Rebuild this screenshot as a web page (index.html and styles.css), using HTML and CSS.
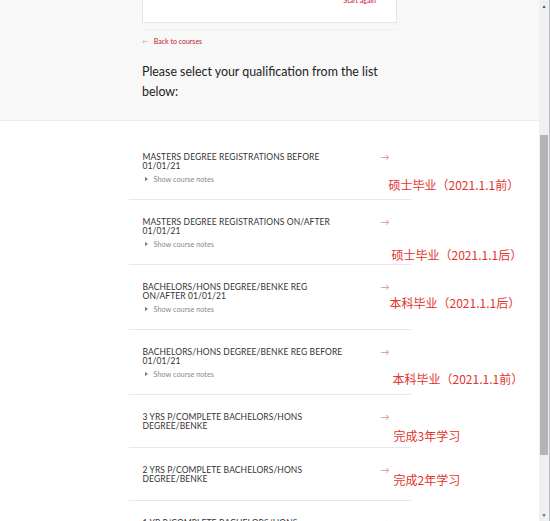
FILE: index.html
```html
<!DOCTYPE html>
<html lang="en">
<head>
    <meta charset="UTF-8">
    <meta name="viewport" content="width=device-width, initial-scale=1.0">
    <title>Select qualification</title>
    <link rel="stylesheet" href="styles.css">
</head>
<body>
    <div class="page">
        <div class="intro">
            <div class="summary-card">
                <a class="start-again" href="#">Start again</a>
            </div>
            <div class="back-row">
                <a class="back-link" href="#"><span class="back-arrow">&larr;</span> Back to courses</a>
            </div>
            <h1 class="intro-title">Please select your qualification from the list below:</h1>
        </div>

        <ul class="qual-list">
            <li class="qual">
                <div class="qual-body">
                    <div class="qual-title">Masters degree registrations before 01/01/21</div>
                    <div class="qual-notes"><span class="caret"></span>Show course notes</div>
                </div>
                <span class="qual-arrow">&rarr;</span>
                <span class="annot annot-1">硕士毕业（2021.1.1前）</span>
            </li>
            <li class="qual">
                <div class="qual-body">
                    <div class="qual-title">Masters degree registrations on/after 01/01/21</div>
                    <div class="qual-notes"><span class="caret"></span>Show course notes</div>
                </div>
                <span class="qual-arrow">&rarr;</span>
                <span class="annot annot-2">硕士毕业（2021.1.1后）</span>
            </li>
            <li class="qual">
                <div class="qual-body">
                    <div class="qual-title">Bachelors/hons degree/benke reg on/after 01/01/21</div>
                    <div class="qual-notes"><span class="caret"></span>Show course notes</div>
                </div>
                <span class="qual-arrow">&rarr;</span>
                <span class="annot annot-3">本科毕业（2021.1.1后）</span>
            </li>
            <li class="qual">
                <div class="qual-body">
                    <div class="qual-title">Bachelors/hons degree/benke reg before 01/01/21</div>
                    <div class="qual-notes"><span class="caret"></span>Show course notes</div>
                </div>
                <span class="qual-arrow">&rarr;</span>
                <span class="annot annot-4">本科毕业（2021.1.1前）</span>
            </li>
            <li class="qual">
                <div class="qual-body">
                    <div class="qual-title">3 yrs p/complete bachelors/hons degree/benke</div>
                </div>
                <span class="qual-arrow">&rarr;</span>
                <span class="annot annot-5">完成3年学习</span>
            </li>
            <li class="qual">
                <div class="qual-body">
                    <div class="qual-title">2 yrs p/complete bachelors/hons degree/benke</div>
                </div>
                <span class="qual-arrow">&rarr;</span>
                <span class="annot annot-6">完成2年学习</span>
            </li>
            <li class="qual">
                <div class="qual-body">
                    <div class="qual-title">1 yr p/complete bachelors/hons degree/benke</div>
                </div>
                <span class="qual-arrow">&rarr;</span>
            </li>
        </ul>
    </div>

    <div class="scrollbar">
        <div class="scroll-btn">&#9650;</div>
        <div class="scroll-track">
            <div class="scroll-thumb"></div>
        </div>
        <div class="scroll-btn">&#9660;</div>
    </div>
</body>
</html>
```

FILE: styles.css
```css
body {
    margin: 0;
    height: 521px;
    overflow: hidden;
    display: flex;
    font-family: 'Lato', 'Noto Sans', sans-serif;
    background-color: #fff;
    color: #2b2b2b;
}

.page {
    flex: 1;
    overflow: hidden;
}

/* top grey block */
.intro {
    background-color: #f8f8f8;
    border-bottom: 1px solid #ececec;
    height: 120px;
    display: flex;
    flex-direction: column;
    align-items: center;
}

.summary-card {
    width: 213px;
    margin-top: -20px;
    padding: 15px 20px 17px;
    background-color: #fff;
    border: 1px solid #e6e6e6;
    text-align: right;
    font-size: 7px;
    line-height: 9px;
}

.start-again {
    color: #c8102e;
    text-decoration: none;
}

.back-row {
    width: 255px;
    margin-top: 6px;
    padding-top: 6px;
    border-top: 1px solid #f0f0f0;
    font-size: 7px;
    line-height: 10px;
}

.back-link {
    color: #c0202f;
    text-decoration: none;
}

.back-arrow {
    color: #e29a9a;
    margin-right: 3px;
}

.intro-title {
    width: 255px;
    margin: 16px 0 0;
    font-size: 12.4px;
    font-weight: normal;
    line-height: 20px;
    color: #222;
}

/* qualification list */
.qual-list {
    list-style: none;
    margin: 0 auto;
    padding: 14px 0 0;
    width: 282px;
}

.qual {
    position: relative;
    display: flex;
    justify-content: space-between;
    padding: 18px 21px 16px 14px;
    border-bottom: 1px solid #e8e8e8;
}

.qual-title {
    width: 204px;
    font-size: 8.5px;
    letter-spacing: 0.1px;
    line-height: 9px;
    text-transform: uppercase;
    color: #333;
}

.qual-notes {
    margin-top: 4px;
    margin-bottom: -1px;
    font-size: 7.3px;
    line-height: 9px;
    color: #8a8a8a;
}

.caret {
    display: inline-block;
    width: 0;
    height: 0;
    margin: 0 6px 0 2px;
    border-top: 2px solid transparent;
    border-bottom: 2px solid transparent;
    border-left: 3px solid #777;
    vertical-align: 1px;
}

.qual-arrow {
    font-size: 9px;
    line-height: 8px;
    color: #d49494;
}

/* red notes written over the screenshot */
.annot {
    position: absolute;
    font-family: 'Noto Sans CJK SC', sans-serif;
    font-size: 12px;
    line-height: 14px;
    color: #e3332c;
    white-space: nowrap;
}

.annot-1 { left: 260px; top: 43px; }
.annot-2 { left: 263px; top: 48px; }
.annot-3 { left: 261px; top: 31px; }
.annot-4 { left: 264px; top: 42px; }
.annot-5 { left: 265px; top: 34px; }
.annot-6 { left: 265px; top: 25px; }

/* fake window scrollbar */
.scrollbar {
    width: 10px;
    display: flex;
    flex-direction: column;
    background-color: #f0f0f0;
    border-right: 1px solid #b8c0c8;
}

.scroll-btn {
    height: 12px;
    font-size: 5px;
    line-height: 12px;
    text-align: center;
    color: #555;
}

.scroll-track {
    flex: 1;
}

.scroll-thumb {
    margin: 123px 1px 0;
    height: 320px;
    background-color: #b4b4b4;
}
```
